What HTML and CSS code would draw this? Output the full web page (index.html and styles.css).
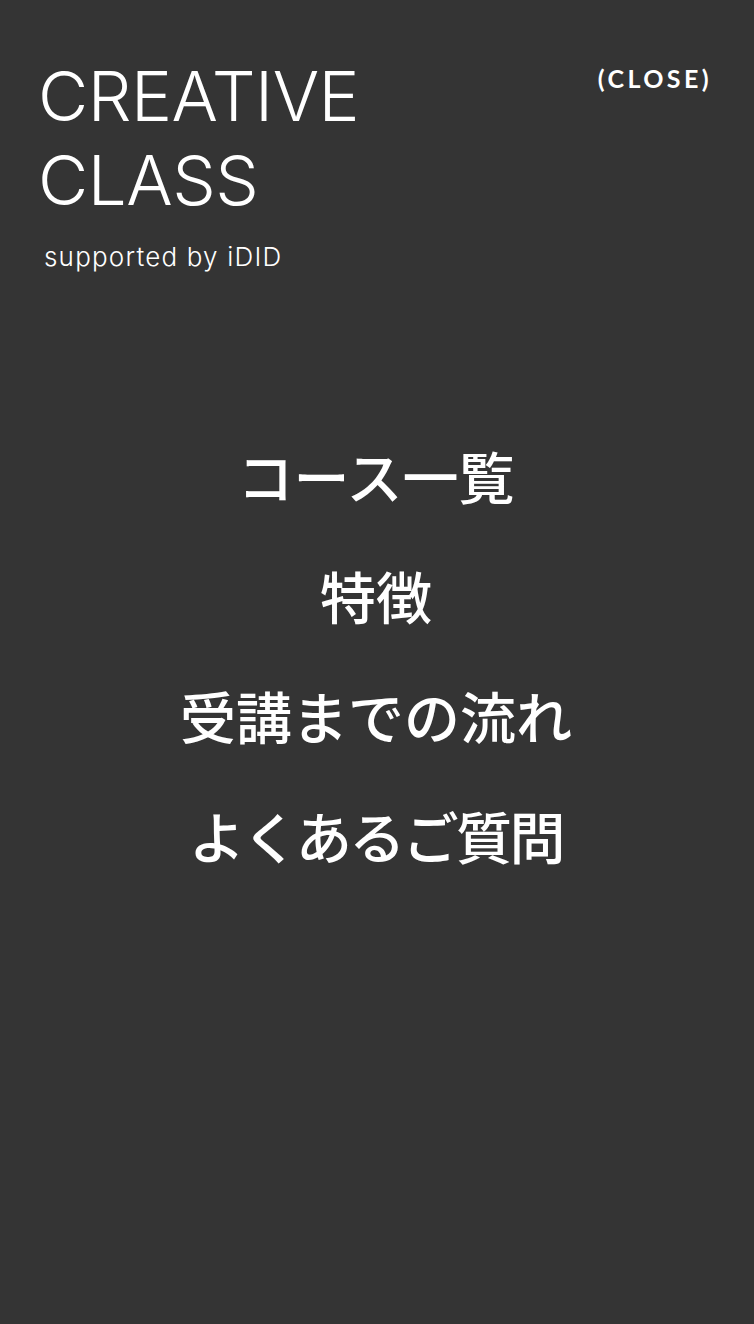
FILE: index.html
```html
<!DOCTYPE html>
<html lang="ja">
<head>
<meta charset="utf-8">
<title>CREATIVE CLASS</title>
<link rel="stylesheet" href="styles.css">
</head>
<body>
<div class="menu">
  <header class="head">
    <div class="brand">
      <div class="logo">CREATIVE<br>CLASS</div>
      <div class="sub">supported by iDID</div>
    </div>
    <a class="close" href="#">(CLOSE)</a>
  </header>
  <nav class="nav">
    <a href="#">コース一覧</a>
    <a href="#">特徴</a>
    <a href="#">受講までの流れ</a>
    <a class="tight" href="#">よくあるご質問</a>
  </nav>
</div>
</body>
</html>
```

FILE: styles.css
```css
html, body {
  margin: 0;
  padding: 0;
  background: #343434;
}
.menu {
  width: 754px;
  height: 1324px;
  box-sizing: border-box;
  padding: 54px 42px 0 38px;
  color: #fff;
}
.head {
  display: flex;
  justify-content: space-between;
  align-items: flex-start;
}
.logo {
  font-family: Inter, "Liberation Sans", sans-serif;
  font-weight: 300;
  font-size: 69px;
  line-height: 84px;
  letter-spacing: -0.5px;
}
.sub {
  font-family: Inter, "Liberation Sans", sans-serif;
  font-weight: 300;
  font-size: 26px;
  line-height: 30px;
  letter-spacing: 1.2px;
  margin: 20px 0 0 6px;
}
.close {
  font-family: Lato, "Liberation Sans", sans-serif;
  font-weight: 700;
  font-size: 25px;
  letter-spacing: 3.4px;
  color: #fff;
  text-decoration: none;
  margin-top: 9px;
}
.nav {
  display: flex;
  flex-direction: column;
  align-items: center;
  gap: 40px;
  margin-top: 163px;
  padding-left: 2px;
}
.nav a {
  font-family: "Noto Sans CJK JP", sans-serif;
  font-weight: 500;
  font-size: 56px;
  line-height: 80px;
  color: #fff;
  text-decoration: none;
}
.nav a.tight {
  letter-spacing: -2.6px;
}
```
